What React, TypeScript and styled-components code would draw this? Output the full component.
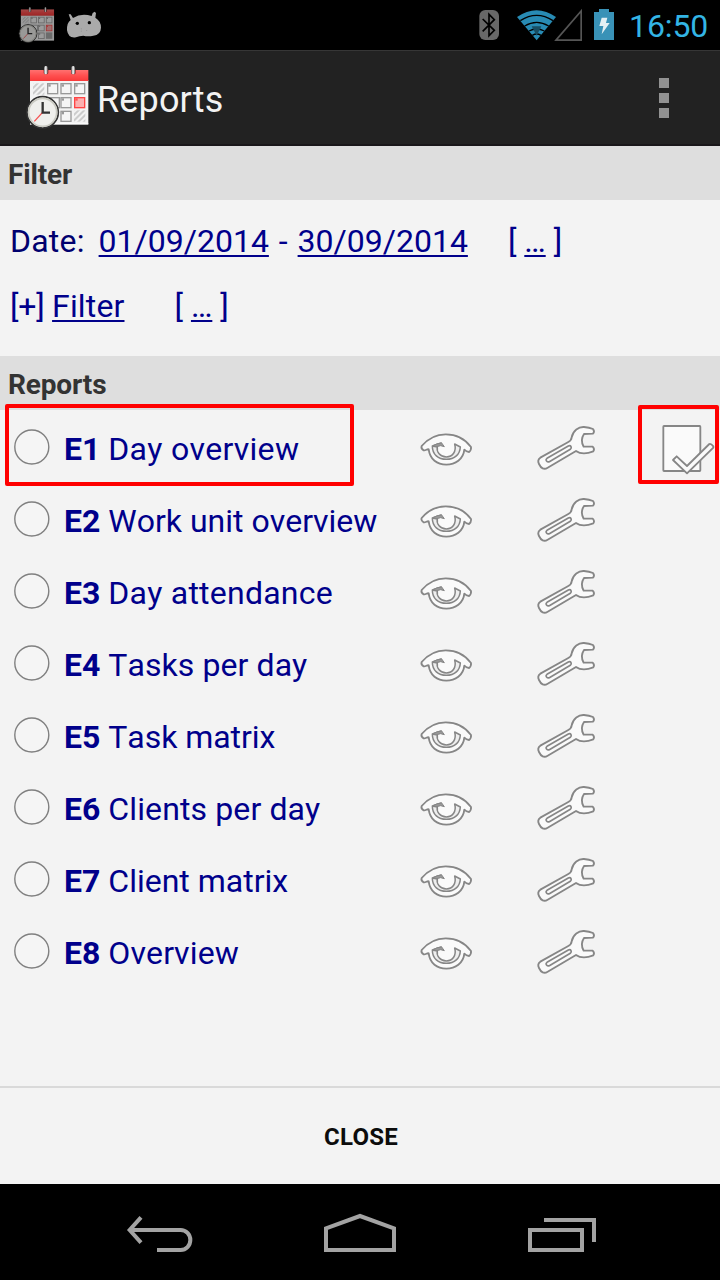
import React from "react";
import styled, { createGlobalStyle } from "styled-components";

const GlobalStyle = createGlobalStyle`
  * { box-sizing: border-box; }
  body { margin: 0; background: #000; font-family: Roboto, sans-serif; }
`;

const Screen = styled.div`
  width: 720px;
  height: 1280px;
  display: flex;
  flex-direction: column;
  background: #f3f3f3;
  overflow: hidden;
`;

const StatusBar = styled.header`
  height: 50px;
  flex: none;
  display: flex;
  align-items: flex-start;
  justify-content: space-between;
  background: #000;
`;

const StatusGroup = styled.div`
  display: flex;
  align-items: flex-start;
  height: 50px;
`;

const Notifications = styled(StatusGroup)`
  padding: 6px 0 0 18px;
  gap: 11px;
`;

const NotificationSlot = styled.span`
  padding-top: 4px;
`;

const Clock = styled.span`
  width: 79px;
  margin-left: 12px;
  margin-right: 12px;
  font-size: 32px;
  line-height: 38px;
  padding-top: 7px;
  color: #33b5e5;
  letter-spacing: -0.1px;
  white-space: nowrap;
`;

const ActionBar = styled.div`
  height: 96px;
  flex: none;
  display: flex;
  align-items: center;
  padding: 0 51px 0 25px;
  background: #222;
  border-top: 1px solid #363636;
  border-bottom: 2px solid #19171a;
`;

const AppIcon = styled.div`
  padding-bottom: 2px;
`;

const Title = styled.h1`
  flex: 1;
  margin: 4px 0 0 7px;
  font-size: 36px;
  line-height: 42px;
  font-weight: 400;
  letter-spacing: 0.15px;
  color: #f3f3f3;
`;

const Overflow = styled.div`
  display: flex;
  flex-direction: column;
  gap: 5px;
`;

const OverflowDot = styled.i`
  width: 10px;
  height: 10px;
  background: #929292;
`;

const SectionHeader = styled.h2`
  height: 54px;
  flex: none;
  margin: 0;
  padding: 12px 8px 0;
  background: #dedede;
  color: #333;
  font-size: 28px;
  line-height: 33px;
  font-weight: 700;
  letter-spacing: -0.15px;
`;

const FilterPanel = styled.div`
  height: 156px;
  flex: none;
  padding: 8px 10px;
`;

const FilterLine = styled.div`
  display: flex;
  height: 65px;
  align-items: center;
  color: #00008b;
  font-size: 32px;
  line-height: 38px;
  white-space: pre;
`;

const FilterText = styled.span<{ $before?: number; $dark?: boolean; $tracking?: number }>`
  margin-left: ${(p) => p.$before ?? 0}px;
  letter-spacing: ${(p) => p.$tracking ?? 0}px;
  color: ${(p) => (p.$dark ? "#00006e" : "inherit")};
`;

const Dash = styled.span`
  margin: 0 2px;
`;

const FilterLink = styled.a`
  text-decoration: underline;
  text-decoration-thickness: 2px;
  text-underline-offset: 3px;
  text-decoration-skip-ink: none;
`;

const ReportList = styled.ul`
  flex: 1;
  margin: 0;
  padding: 1px 0 0;
  list-style: none;
`;

const ReportRow = styled.li`
  position: relative;
  height: 72px;
  display: grid;
  grid-template-columns: 64px 354px 117px 125px 60px;
  align-items: center;
`;

const Radio = styled.svg`
  display: block;
  width: 36px;
  height: 36px;
  margin-left: 14px;
  fill: #f5f5f5;
  stroke: #808080;
  stroke-width: 1.4;
`;

const ReportLabel = styled.span`
  padding-top: 4px;
  color: #00008b;
  font-size: 32px;
  line-height: 38px;
  font-kerning: none;
  white-space: nowrap;
`;

const Code = styled.b`
  font-weight: 700;
`;

const ReportName = styled.span<{ $tracking: number }>`
  letter-spacing: ${(p) => p.$tracking}px;
`;

const Highlight = styled.div<{ $left: number; $top: number; $width: number; $height: number }>`
  position: absolute;
  left: ${(p) => p.$left}px;
  top: ${(p) => p.$top}px;
  width: ${(p) => p.$width}px;
  height: ${(p) => p.$height}px;
  border: 4px solid #f00;
  border-radius: 2px;
`;

const Footer = styled.div`
  height: 98px;
  flex: none;
  display: flex;
  border-top: 2px solid #d9d9d9;
`;

const CloseButton = styled.button`
  flex: 1;
  border: 0;
  background: none;
  padding: 2px 0 0 2px;
  font: 700 24px/28px Roboto, sans-serif;
  letter-spacing: 0.2px;
  color: #0c0c0c;
`;

const NavBar = styled.nav`
  height: 96px;
  flex: none;
  display: grid;
  grid-template-columns: 124px 196px 204px 196px;
  background: #000;
`;

const NavIcon = styled.svg`
  width: 76px;
  height: 96px;
  fill: none;
  stroke: #a3a3a3;
  stroke-width: 12;
`;

const LineIcon = styled.svg<{ $drop: number }>`
  display: block;
  margin-top: ${(p) => p.$drop}px;
  fill: #fafafa;
  stroke: #868686;
  stroke-width: 5.5;
  stroke-linejoin: round;
`;

const Glyph = styled.svg<{ $dim?: boolean }>`
  display: block;
  flex: none;
  opacity: ${(p) => (p.$dim ? 0.64 : 1)};
`;

const EyeIcon = () => (
  <LineIcon $drop={6} width="56" height="40" viewBox="54 90 168 120">
    <path d="M65 138C82 118 107 103 137 103C168 103 196 118 213 141C214 148 211 153 207 156Q199 155 193 149C190 178 166 194 139 194C111 194 90 178 86 148C82 146 76 153 71 151Q62 146 65 138Z" />
    <path fill="#eee" strokeWidth="4.5" d="M97 138C97 164 115 178 139 178C164 178 180 163 181 141L164 132C170 155 158 170 139 171C120 170 109 156 112 141L97 138L125 128" />
    <path fill="#999" strokeWidth="3" d="M99 137Q110 130 125 129L133 140L122 137L110 140Z" />
  </LineIcon>
);

const WrenchIcon = () => (
  <LineIcon $drop={2} width="63" height="48" viewBox="405 72 189 144">
    <path d="M421 173L505 126Q514 121 515 112C519 91 536 80 552 81Q568 82 579 87Q585 95 579 101L552 102C544 114 544 128 551 140L578 140Q585 147 580 154C562 161 541 162 528 153L443 203C432 210 423 205 417 192Q411 180 421 173Z" />
    <path strokeWidth="5" d="M441 175L505 138C512 134 517 143 511 148L448 185C442 188 434 180 441 175Z" />
  </LineIcon>
);

const CheckIcon = () => (
  <LineIcon $drop={5} width="56" height="54" viewBox="780 67 168 162">
    <rect x="790" y="76" width="111" height="135" rx="2" />
    <path d="M819 178L830 167L861 196L928 130Q933 128 940 137V141L861 218Z" />
  </LineIcon>
);

const cells = [
  [81, 69], [121, 69], [162, 69],
  [86, 111], [121, 111],
  [121, 152],
];

const CalendarIcon = ({ size, small }: { size: number; small?: boolean }) => (
  <Glyph width={size} height={size} viewBox="15 12 195 195" $dim={small}>
    <defs>
      <linearGradient id="redHead" x1="0" y1="0" x2="0" y2="1">
        <stop offset="0" stopColor="#ff7170" />
        <stop offset="0.5" stopColor="#ff5050" />
        <stop offset="1" stopColor="#f83a3a" />
      </linearGradient>
      <linearGradient id="ring" x1="0" y1="0" x2="1" y2="0">
        <stop offset="0" stopColor="#777" />
        <stop offset="0.5" stopColor="#fff" />
        <stop offset="1" stopColor="#666" />
      </linearGradient>
      <pattern id="hatch" width="12" height="12" patternUnits="userSpaceOnUse" patternTransform="rotate(45)">
        <rect width="6" height="12" fill="#ccc" />
      </pattern>
    </defs>
    <rect x="30" y="60" width="175" height="132" fill="#f3f3f3" />
    <rect x="30" y="190" width="175" height="4" fill="#fff" />
    <rect x="30" y="30" width="175" height="33" fill="url(#redHead)" />
    <rect x="71" y="26" width="14" height="17" rx="5" fill="#8e2020" />
    <rect x="153" y="26" width="14" height="17" rx="5" fill="#8e2020" />
    <rect x="72" y="18" width="11" height="25" rx="5" fill="url(#ring)" />
    <rect x="154" y="18" width="11" height="25" rx="5" fill="url(#ring)" />
    <rect x="39" y="70" width="34" height="34" fill="url(#hatch)" />
    <rect x="162" y="151" width="34" height="34" fill={small ? "#aaa" : "url(#hatch)"} />
    {cells.map(([x, y]) => (
      <g key={`${x}-${y}`}>
        <rect x={x + 2} y={y + 2} width="30" height="30" fill="#f5f5f5" stroke="#999" strokeWidth="4" />
        <rect x={x + 4} y={y + 4} width="7" height="7" fill="#999" />
      </g>
    ))}
    <rect x="164" y="113" width="30" height="30" fill="#fbb0b0" stroke="#f44" strokeWidth="4" />
    <rect x="166" y="115" width="7" height="7" fill="#f55" />
    <circle cx="68" cy="157" r="47" fill="#efefec" stroke="#333" strokeWidth="5" />
    <circle cx="68" cy="157" r="42" fill="none" stroke="#cacac2" strokeWidth="5" />
    <path d="M67 158L43 184" stroke="#f65050" strokeWidth="4" />
    <path d="M68 126V158H90" fill="none" stroke="#333" strokeWidth="7" />
  </Glyph>
);

const AndroidIcon = () => (
  <Glyph width="36" height="30" viewBox="198 30 108 90" fill="#aaa">
    <path d="M206 43L212 43L219 54Q244 38 275 48L278 39L284 35L288 39L286 53Q303 63 303 83Q302 104 280 107Q264 110 250 107Q238 108 228 112Q205 116 201 91Q200 68 212 60Z" />
    <circle cx="232" cy="70" r="5" fill="#000" />
    <circle cx="268" cy="68" r="5" fill="#000" />
    <path d="M244 85v3M244 92v3M260 90v3" stroke="#888" strokeWidth="2" />
  </Glyph>
);

const StatusIcons = () => (
  <Glyph width="140" height="50" viewBox="51 0 420 150">
    <rect x="58" y="30" width="59" height="90" rx="18" fill="#686868" />
    <path d="M68 57L103 91L87 107V43L103 59L68 94" fill="none" stroke="#000" strokeWidth="5" />
    <path d="M230 121L171 51Q230 10 288 51Z" fill="#288bb4" />
    <path d="M181 62Q230 30 279 62M194 78Q230 56 266 78M207 93Q230 81 253 93M217 106Q230 98 243 106" fill="none" stroke="#000" strokeWidth="4" />
    <path d="M215 79H244L230 107Z" fill="#174d63" />
    <path d="M288 120.500L363.500 33V120.500Z" fill="none" stroke="#555" strokeWidth="5" />
    <path d="M402 36H417V27H447V36H462V120H402Z" fill="#3992b7" />
    <path d="M425 53H442L438 69H449L425 103L430 78H418Z" fill="#e4f0f4" />
  </Glyph>
);

const reports = [
  { code: "E1", name: "Day overview", tracking: 0.3 },
  { code: "E2", name: "Work unit overview", tracking: 0 },
  { code: "E3", name: "Day attendance", tracking: 0.24 },
  { code: "E4", name: "Tasks per day", tracking: 0.08 },
  { code: "E5", name: "Task matrix", tracking: -0.05 },
  { code: "E6", name: "Clients per day", tracking: 0.12 },
  { code: "E7", name: "Client matrix", tracking: 0 },
  { code: "E8", name: "Overview", tracking: 0.12 },
];

export default function App() {
  return (
    <Screen>
      <GlobalStyle />
      <StatusBar>
        <Notifications>
          <CalendarIcon size={37} small />
          <NotificationSlot>
            <AndroidIcon />
          </NotificationSlot>
        </Notifications>
        <StatusGroup>
          <StatusIcons />
          <Clock>16:50</Clock>
        </StatusGroup>
      </StatusBar>
      <ActionBar>
        <AppIcon>
          <CalendarIcon size={65} />
        </AppIcon>
        <Title>Reports</Title>
        <Overflow>
          <OverflowDot />
          <OverflowDot />
          <OverflowDot />
        </Overflow>
      </ActionBar>
      <SectionHeader>Filter</SectionHeader>
      <FilterPanel>
        <FilterLine>
          <FilterText $dark $tracking={0.2}>Date:</FilterText>
          <FilterText $before={14}>
            <FilterLink>01/09/2014</FilterLink>
            <Dash> - </Dash>
            <FilterLink>30/09/2014</FilterLink>
          </FilterText>
          <FilterText $before={40}>
            [ <FilterLink>…</FilterLink> ]
          </FilterText>
        </FilterLine>
        <FilterLine>
          <FilterText $tracking={-0.25}>[+] </FilterText>
          <FilterText $tracking={0.15}>
            <FilterLink>Filter</FilterLink>
          </FilterText>
          <FilterText $before={50}>
            [ <FilterLink>…</FilterLink> ]
          </FilterText>
        </FilterLine>
      </FilterPanel>
      <SectionHeader>Reports</SectionHeader>
      <ReportList>
        {reports.map(({ code, name, tracking }, index) => (
          <ReportRow key={code}>
            <Radio viewBox="0 0 36 36">
              <circle cx="17.8" cy="18" r="17" />
            </Radio>
            <ReportLabel>
              <Code>{code}</Code> <ReportName $tracking={tracking}>{name}</ReportName>
            </ReportLabel>
            <EyeIcon />
            <WrenchIcon />
            {index === 0 && <CheckIcon />}
            {index === 0 && <Highlight $left={5} $top={-7} $width={349} $height={82} />}
            {index === 0 && <Highlight $left={638} $top={-6} $width={81} $height={79} />}
          </ReportRow>
        ))}
      </ReportList>
      <Footer>
        <CloseButton>CLOSE</CloseButton>
      </Footer>
      <NavBar>
        <span />
        <NavIcon viewBox="70 12 228 288">
          <path d="M94 150H240A29 30 0 0 1 240 210H169" />
          <path d="M121 112L87 150L121 188" />
        </NavIcon>
        <NavIcon viewBox="660 12 228 288">
          <path d="M678 210V145L780 108L882 145V210Z" />
        </NavIcon>
        <NavIcon viewBox="1272 12 228 288">
          <path d="M1290 150H1446V210H1290Z" />
          <path d="M1332 120H1482V186" />
        </NavIcon>
      </NavBar>
    </Screen>
  );
}
